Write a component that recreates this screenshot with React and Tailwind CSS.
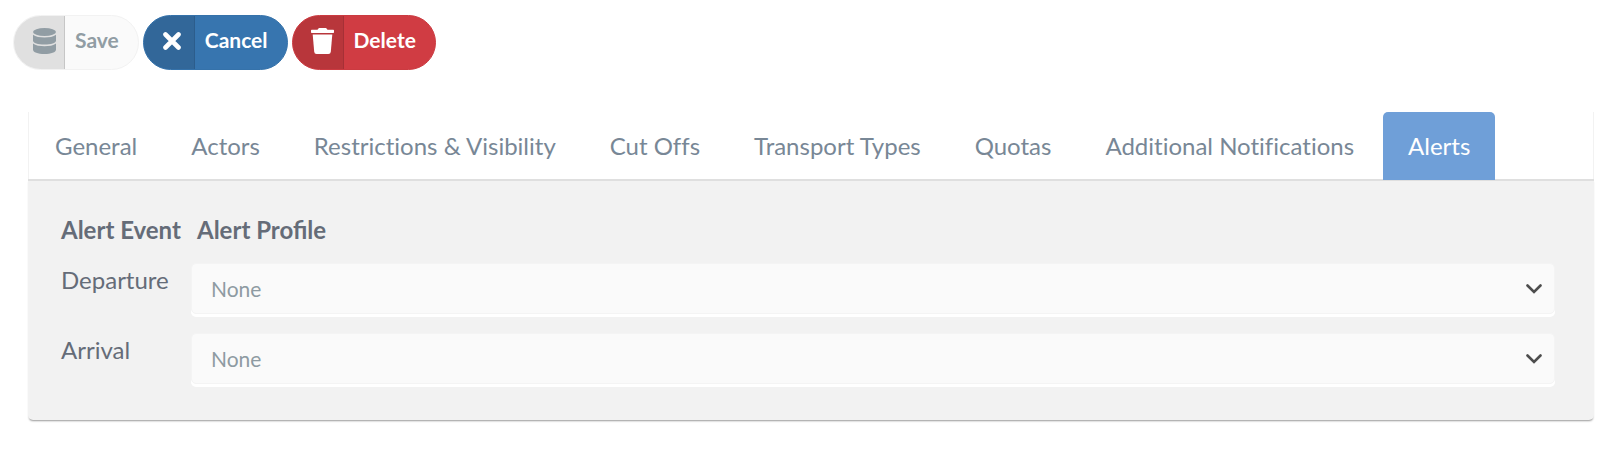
import React, { useState } from 'react';

const TABS = [
  'General',
  'Actors',
  'Restrictions & Visibility',
  'Cut Offs',
  'Transport Types',
  'Quotas',
  'Additional Notifications',
  'Alerts',
];

const EVENTS = ['Departure', 'Arrival'];

const DatabaseIcon = () => (
  <svg viewBox="0 0 23 26" className="h-[26px] w-[23px]" fill="currentColor" aria-hidden="true">
    <ellipse cx="11.5" cy="4" rx="11.5" ry="4" />
    <path d="M0 6.8C2.5 9 7 9.4 11.5 9.4S20.5 9 23 6.8V12.5C23 15 18 16.6 11.5 16.6S0 15 0 12.5Z" />
    <path d="M0 15.5C2.5 17.7 7 18.2 11.5 18.2S20.5 17.7 23 15.5V21.5C23 24.3 18 26 11.5 26S0 24.3 0 21.5Z" />
  </svg>
);

const CloseIcon = () => (
  <svg viewBox="0 0 18 18" className="h-[18px] w-[18px]" fill="none" stroke="currentColor" strokeWidth="4.6" strokeLinecap="round" aria-hidden="true">
    <path d="M2.5 2.5L15.5 15.5M15.5 2.5L2.5 15.5" />
  </svg>
);

const TrashIcon = () => (
  <svg viewBox="0 0 23 26" className="h-[26px] w-[23px]" fill="currentColor" aria-hidden="true">
    <path d="M.7 1.7H6.5L7.4.4Q7.7 0 8.2 0H14.8Q15.3 0 15.6.4L16.5 1.7H22.3Q23 1.7 23 2.4V4.3Q23 5 22.3 5H.7Q0 5 0 4.3V2.4Q0 1.7.7 1.7Z" />
    <path d="M1.7 6.5H21.3L19.8 23.8Q19.6 26 17.4 26H5.6Q3.4 26 3.2 23.8Z" />
  </svg>
);

const ActionButton = ({ icon, label, className, iconClassName, disabled }) => (
  <button
    type="button"
    disabled={disabled}
    className={`flex h-[55px] items-stretch overflow-hidden rounded-full border text-[21px] font-bold ${className}`}
  >
    <span className={`flex w-[51px] items-center justify-center border-r pb-1 ${iconClassName}`}>{icon}</span>
    <span className="flex items-center pr-[19px] pb-1.5 pl-2.5">{label}</span>
  </button>
);

const ProfileSelect = ({ id }) => (
  <div className="relative">
    <select
      id={id}
      defaultValue="none"
      className="block h-[51px] w-full appearance-none rounded-[5px] border border-[#f4f4f4] bg-[#fafafa] pt-px pr-12 pl-[19px] text-[21px] text-[#8e9ba2] shadow-[0_3px_0_#fff]"
    >
      <option value="none">None</option>
    </select>
    <svg viewBox="0 0 16 10" className="pointer-events-none absolute top-[21px] right-[13px] h-2.5 w-4" fill="none" stroke="#4d4d4d" strokeWidth="2.6" strokeLinecap="round" aria-hidden="true">
      <path d="M1.5 1.5L8 8L14.5 1.5" />
    </svg>
  </div>
);

export default function App() {
  const [active, setActive] = useState('Alerts');

  return (
    <div className="bg-white pb-7 font-['Lato',sans-serif] text-[#656c78]">
      {/* Toolbar */}
      <div className="flex gap-1 pt-[15px] pl-[13px]">
        <ActionButton
          disabled
          icon={<DatabaseIcon />}
          label="Save"
          className="border-[#f2f2f2] bg-[#fafafa] text-[#919da4]"
          iconClassName="border-[#c6c6c6] bg-[#e0e0e0] pl-2.5"
        />
        <ActionButton
          icon={<CloseIcon />}
          label="Cancel"
          className="border-[#3572aa] bg-[#3775af] text-white"
          iconClassName="border-[#2c5d8c] bg-[#326799] pl-1.5"
        />
        <ActionButton
          icon={<TrashIcon />}
          label="Delete"
          className="border-[#cb3b41] bg-[#d03c43] text-white"
          iconClassName="border-[#a63036] bg-[#b8363b] pl-2.5"
        />
      </div>

      {/* Tabbed card */}
      <div className="mt-[42px] mr-[30px] ml-7">
        <div
          role="tablist"
          className="flex h-[67px] gap-1 border-x border-[#f2f2f2] pl-px text-2xl [font-variant-ligatures:none]"
        >
          {TABS.map((tab) => (
            <button
              key={tab}
              type="button"
              role="tab"
              aria-selected={tab === active}
              onClick={() => setActive(tab)}
              className={`relative -mb-px rounded-t-[5px] px-[25px] whitespace-nowrap ${
                tab === active ? 'bg-[#6f9fd8] text-white' : 'text-[#788796]'
              }`}
            >
              {tab}
            </button>
          ))}
        </div>

        <div
          role="tabpanel"
          className="rounded-b-[5px] border-t-2 border-[#dfdfdf] bg-[#f2f2f2] pt-[33px] pr-[39px] pb-[17px] pl-[33px] shadow-[0_2px_2px_-1px_rgba(0,0,0,0.4)]"
        >
          <table className="w-full text-2xl">
            <thead>
              <tr className="text-left">
                <th className="w-[130px] pb-[17px] font-bold whitespace-nowrap">Alert Event</th>
                <th className="pb-[17px] pl-1.5 font-bold">Alert Profile</th>
              </tr>
            </thead>
            <tbody>
              {EVENTS.map((event) => (
                <tr key={event} className="align-top">
                  <td className="pt-px">
                    <label htmlFor={event}>{event}</label>
                  </td>
                  <td className="pb-[19px]">
                    <ProfileSelect id={event} />
                  </td>
                </tr>
              ))}
            </tbody>
          </table>
        </div>
      </div>
    </div>
  );
}
